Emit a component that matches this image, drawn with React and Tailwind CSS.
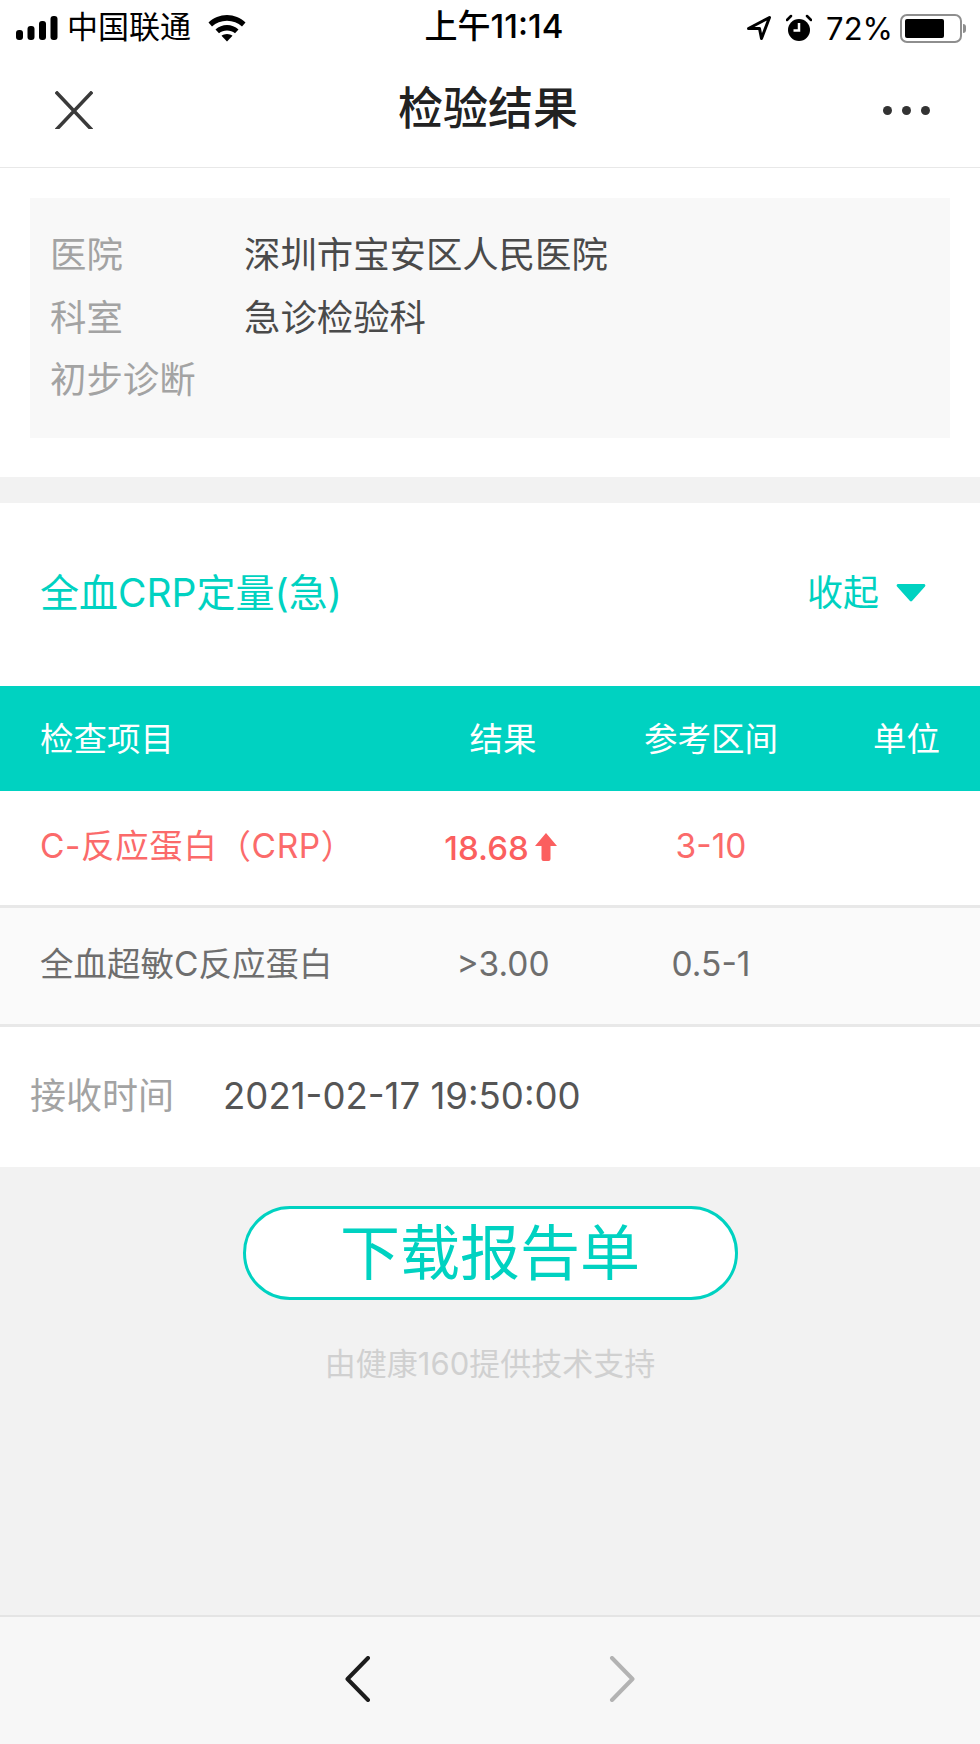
const teal = "text-[#00d2c1]";
const rowGrid = "grid grid-cols-[400px_206px_210px_164px] items-center";

function Signal() {
  return (
    <svg width="43" height="27" viewBox="0 0 43 27" fill="#000">
      <rect x="0" y="15" width="7" height="10" rx="3" />
      <rect x="11.5" y="11" width="7" height="14" rx="3" />
      <rect x="23" y="6" width="7" height="19" rx="3" />
      <rect x="34.5" y="1" width="7" height="24" rx="3" />
    </svg>
  );
}

function Wifi() {
  return (
    <svg width="38" height="28" viewBox="0 0 38 28" fill="#000">
      <path d="M0.5 8.5C5.5 3.8 12 1 19 1s13.500 2.800 18.500 7.500l-3.500 4C30 9 24.800 6.800 19 6.800S8 9 4 12.500z" />
      <path d="M7.500 15.500C10.700 12.700 14.700 11 19 11s8.300 1.700 11.500 4.500L27 19.300C24.700 17.500 22 16.500 19 16.500s-5.700 1-8 2.800z" />
      <path d="M13.500 21.800c1.500-1.100 3.400-1.800 5.500-1.800s4 .7 5.500 1.800L19 27.500z" />
    </svg>
  );
}

function Locate() {
  return (
    <svg width="26" height="26" viewBox="0 0 26 26" fill="none" stroke="#000" strokeWidth="3" strokeLinejoin="round">
      <path d="M2.500 13.500 23.500 2.500 15.500 23.500 13.500 13.500z" />
    </svg>
  );
}

function Alarm() {
  return (
    <svg width="26" height="28" viewBox="0 0 26 28" fill="#000">
      <circle cx="13" cy="16" r="11" />
      <path d="M13 9v7.500H7.500" fill="none" stroke="#fff" strokeWidth="2.500" />
      <path d="M1 6 5 2M25 6l-4-4" stroke="#000" strokeWidth="2.500" strokeLinecap="round" />
    </svg>
  );
}

function Battery() {
  return (
    <div className="flex items-center">
      <div className="w-[62px] h-[29px] rounded-[7px] border-2 border-[#8e8e8e] p-[3px]">
        <div className="h-full w-[39px] bg-black rounded-[2px]" />
      </div>
      <div className="w-[3px] h-[9px] bg-[#8e8e8e] rounded-r-sm ml-[1px]" />
    </div>
  );
}

function InfoRow({ label, value }) {
  return (
    <div className="flex items-center h-[62.500px] text-[36.400px] leading-none">
      <span className="w-[214px] pl-[20px] text-[#a3a3a3] whitespace-nowrap">{label}</span>
      <span className="text-[#4a4a4a]">{value}</span>
    </div>
  );
}

export default function App() {
  return (
    <div
      className="w-[980px] h-[1744px] flex flex-col bg-[#f2f2f2] overflow-hidden"
      style={{ fontFamily: 'Inter, "Noto Sans CJK SC", "Noto Sans", sans-serif' }}
    >
      {/* Status bar */}
      <div className="h-[56px] bg-white grid grid-cols-3 items-center pl-4 pr-[14px] text-black">
        <div className="flex items-center">
          <Signal />
          <span className="ml-[8px] text-[31px] leading-none whitespace-nowrap pb-[4px]">中国联通</span>
          <span className="ml-[17px]"><Wifi /></span>
        </div>
        <div className="text-center text-[33px] leading-none font-medium whitespace-nowrap pl-[6px] pb-[4px]">上午11:14</div>
        <div className="flex items-center justify-end gap-[14px]">
          <Locate />
          <Alarm />
          <span className="text-[31px] leading-none whitespace-nowrap -mr-[7px]">72%</span>
          <Battery />
        </div>
      </div>

      {/* Nav bar */}
      <div className="h-[112px] bg-white border-b border-[#e8e8e8] flex items-center justify-between pl-[55px] pr-[50px] pb-[3px]">
        <svg width="38" height="38" viewBox="0 0 38 38" stroke="#3a3a3a" strokeWidth="3.500" strokeLinecap="square">
          <path d="M2 2l34 36M36 2 2 38" />
        </svg>
        <span className="text-[45px] leading-none font-medium text-[#222] pb-[4px]">检验结果</span>
        <div className="flex gap-[10px]">
          <span className="w-[9px] h-[9px] rounded-full bg-[#333]" />
          <span className="w-[9px] h-[9px] rounded-full bg-[#333]" />
          <span className="w-[9px] h-[9px] rounded-full bg-[#333]" />
        </div>
      </div>

      {/* Hospital info */}
      <div className="h-[309px] bg-white pt-[30px] px-[30px]">
        <div className="h-[240px] bg-[#f8f8f8] pt-[26px]">
          <InfoRow label="医院" value="深圳市宝安区人民医院" />
          <InfoRow label="科室" value="急诊检验科" />
          <InfoRow label="初步诊断" value="" />
        </div>
      </div>

      {/* Section head */}
      <div className="mt-[26px] h-[183px] bg-white flex items-center justify-between pl-[40px] pr-[54px] pb-[4px]">
        <span className={`text-[39px] leading-none ${teal}`}>全血CRP定量(急)</span>
        <div className="flex items-center gap-[17px]">
          <span className={`text-[36px] leading-none ${teal}`}>收起</span>
          <svg width="30" height="19" viewBox="0 0 30 19" fill="#00d2c1">
            <path d="M2 1h26a1.500 1.500 0 0 1 1 2.500L16 18a1.500 1.500 0 0 1-2 0L1 3.500A1.500 1.500 0 0 1 2 1z" />
          </svg>
        </div>
      </div>

      {/* Table header */}
      <div className={`${rowGrid} h-[105px] bg-[#00d2c1] text-white text-[33.500px] leading-none pt-[2px]`}>
        <span className="pl-[40px]">检查项目</span>
        <span className="text-center">结果</span>
        <span className="text-center">参考区间</span>
        <span className="text-right pr-[40px]">单位</span>
      </div>

      {/* Rows */}
      <div className={`${rowGrid} h-[117px] bg-white border-b-[3px] border-[#e8e8e8] text-[#fb6a6a] text-[33.500px] leading-none pb-[2px]`}>
        <span className="pl-[40px] whitespace-nowrap tracking-[0.6px]">C-反应蛋白（CRP）</span>
        <span className="flex items-center justify-center font-medium text-[33px] text-[#fb5f5f] pr-[5px] pt-[3px]">
          18.68
          <svg width="22" height="28" viewBox="0 0 22 28" fill="#fb5f5f" className="ml-[6px] -mt-[3px]">
            <path d="M11 0 22 13h-6.500v13a2 2 0 0 1-2 2h-5a2 2 0 0 1-2-2V13H0z" />
          </svg>
        </span>
        <span className="text-center">3-10</span>
        <span />
      </div>
      <div className={`${rowGrid} h-[119px] bg-[#fafafa] border-b-[3px] border-[#e8e8e8] text-[#6e6e6e] text-[33.500px] leading-none pb-[2px]`}>
        <span className="pl-[40px] whitespace-nowrap">全血超敏C反应蛋白</span>
        <span className="text-center">&gt;3.00</span>
        <span className="text-center">0.5-1</span>
        <span />
      </div>

      {/* Received time */}
      <div className="h-[140px] bg-white flex items-center pl-[30px] text-[36px] leading-none pb-[2px]">
        <span className="w-[193px] text-[#a3a3a3]">接收时间</span>
        <span className="text-[#555] whitespace-nowrap text-[36.600px]">2021-02-17 19:50:00</span>
      </div>

      {/* Download */}
      <div className="flex-1 flex flex-col items-center pt-[39px]">
        <div className={`w-[495px] h-[94px] rounded-full border-[3px] border-[#00d2c1] bg-white flex items-center justify-center text-[60px] leading-none ${teal}`}>
          下载报告单
        </div>
        <div className="mt-[48px] text-[31px] leading-none text-[#d0d0d0]">由健康160提供技术支持</div>
      </div>

      {/* Bottom bar */}
      <div className="h-[129px] bg-[#f7f7f7] border-t-2 border-[#e4e4e4] flex items-center justify-center gap-[238px] pb-[4px]">
        <svg width="26" height="46" viewBox="0 0 26 46" fill="none" stroke="#1c1c1c" strokeWidth="4" strokeLinecap="round" strokeLinejoin="round">
          <path d="M23 2 2.500 23 23 44" />
        </svg>
        <svg width="26" height="46" viewBox="0 0 26 46" fill="none" stroke="#b3b3b3" strokeWidth="4" strokeLinecap="round" strokeLinejoin="round">
          <path d="M3 2l20.500 21L3 44" />
        </svg>
      </div>
    </div>
  );
}
